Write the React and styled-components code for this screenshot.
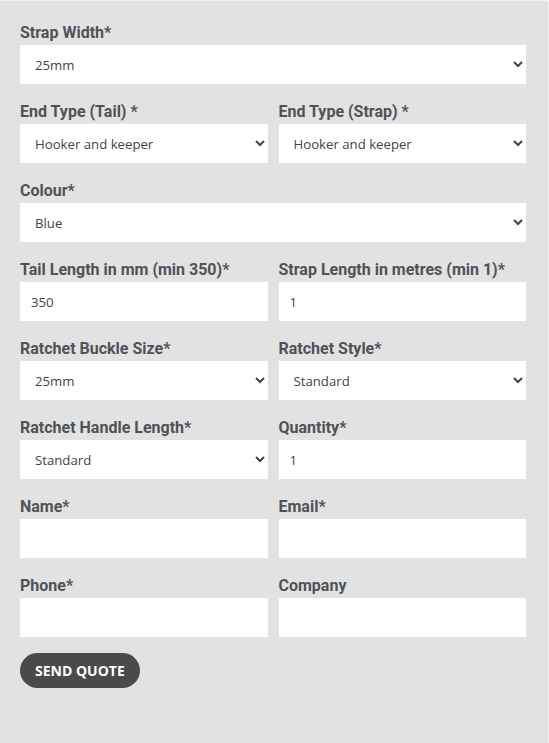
import React from "react";
import styled, { createGlobalStyle } from "styled-components";

const GlobalStyle = createGlobalStyle`
  html, body {
    margin: 0;
    padding: 0;
    background: #e2e2e2;
  }
  * {
    box-sizing: border-box;
  }
`;

const fields = [
  { name: "strap_width", label: "Strap Width*", type: "select", value: "25mm", options: ["25mm", "35mm", "50mm"], full: true },
  { name: "end_tail", label: "End Type (Tail) *", type: "select", value: "Hooker and keeper", options: ["Hooker and keeper", "Claw hook", "Loop"] },
  { name: "end_strap", label: "End Type (Strap) *", type: "select", value: "Hooker and keeper", options: ["Hooker and keeper", "Claw hook", "Loop"] },
  { name: "colour", label: "Colour*", type: "select", value: "Blue", options: ["Blue", "Orange", "Yellow", "Black"], full: true },
  { name: "tail_length", label: "Tail Length in mm (min 350)*", type: "text", value: "350" },
  { name: "strap_length", label: "Strap Length in metres (min 1)*", type: "text", value: "1" },
  { name: "buckle_size", label: "Ratchet Buckle Size*", type: "select", value: "25mm", options: ["25mm", "35mm", "50mm"] },
  { name: "ratchet_style", label: "Ratchet Style*", type: "select", value: "Standard", options: ["Standard", "Ergo"] },
  { name: "handle_length", label: "Ratchet Handle Length*", type: "select", value: "Standard", options: ["Standard", "Long"] },
  { name: "quantity", label: "Quantity*", type: "text", value: "1" },
  { name: "name", label: "Name*", type: "text", value: "" },
  { name: "email", label: "Email*", type: "email", value: "" },
  { name: "phone", label: "Phone*", type: "tel", value: "" },
  { name: "company", label: "Company", type: "text", value: "" },
];

const QuoteForm = () => {
  return (
    <Wrapper>
      <GlobalStyle />
      <form onSubmit={(e) => e.preventDefault()}>
        <Grid>
          {fields.map((f) => (
            <Field key={f.name} $full={f.full}>
              <Label htmlFor={f.name}>{f.label}</Label>
              {f.type === "select" ? (
                <Select id={f.name} name={f.name} defaultValue={f.value}>
                  {f.options.map((o) => (
                    <option key={o} value={o}>
                      {o}
                    </option>
                  ))}
                </Select>
              ) : (
                <Input id={f.name} name={f.name} type={f.type} defaultValue={f.value} />
              )}
            </Field>
          ))}
        </Grid>
        <SendButton type="submit">Send Quote</SendButton>
      </form>
    </Wrapper>
  );
};

const Wrapper = styled.section`
  min-height: 100vh;
  width: 549px;
  padding: 20px 22px 40px 20px;
  background: #e2e2e2;
  border-top: 1px solid #f2f2f2;
  border-right: 1px solid #f2f2f2;
`;

const Grid = styled.div`
  display: grid;
  grid-template-columns: 1fr 1fr;
  column-gap: 11px;
`;

const Field = styled.div`
  grid-column: ${(p) => (p.$full ? "1 / -1" : "auto")};
  display: flex;
  flex-direction: column;
  margin-bottom: 16px;
`;

const Label = styled.label`
  font-family: Roboto, "Liberation Sans", sans-serif;
  font-size: 16px;
  font-weight: 700;
  line-height: 20px;
  color: #4f5257;
  padding-top: 2px;
  margin-bottom: 2px;
`;

const control = `
  height: 39px;
  width: 100%;
  border: none;
  border-radius: 0;
  background: #fff;
  font-family: "Open Sans", "Liberation Sans", sans-serif;
  font-size: 13.2px;
  color: #444;
  padding: 0 11px;
  outline: none;
`;

const Select = styled.select`
  ${control}
`;

const Input = styled.input`
  ${control}
`;

const SendButton = styled.button`
  height: 35px;
  padding: 0 15px;
  border: none;
  border-radius: 18px;
  background: #4a4a4a;
  color: #fff;
  font-family: "Open Sans", "Liberation Sans", sans-serif;
  font-size: 14px;
  font-weight: 700;
  text-transform: uppercase;
  cursor: pointer;
`;

export default QuoteForm;
